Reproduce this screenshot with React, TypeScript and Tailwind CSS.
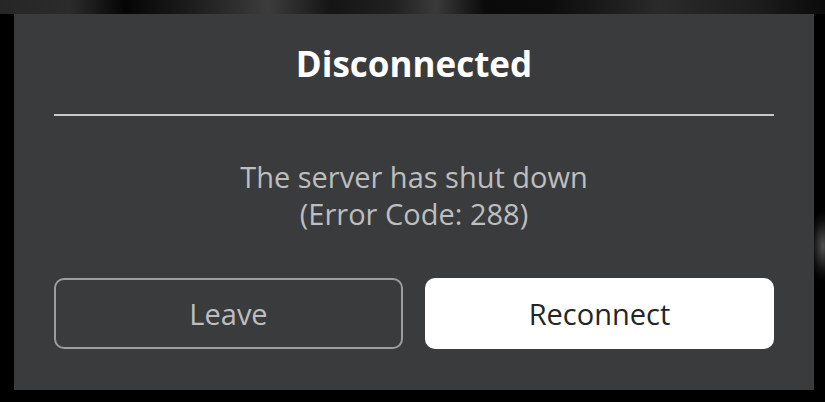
export default function App() {
  return (
    <div className="w-[825px] h-[402px] flex flex-col bg-black overflow-hidden font-['Open_Sans',sans-serif]">
      {/* blurred game view peeking above the dialog */}
      <div className="h-[14px] shrink-0 bg-[linear-gradient(90deg,#262626_0px,#2b2b2b_70px,#050505_125px,#1c1c1c_190px,#3c3c3c_268px,#151515_330px,#1f1f1f_390px,#3a3a3a_436px,#0a0a0a_485px,#0c0c0c_550px,#2a2a2a_660px,#1c1c1c_760px,#0a0a0a_825px)]" />
      <div className="flex flex-1">
        <div className="w-[14px] shrink-0 bg-black" />
        <div className="w-[800px] bg-[#393b3d] flex flex-col px-[40px] pt-[28px] pb-[41px]">
          <h1 className="text-center text-white font-bold text-[35px] leading-[44px]">Disconnected</h1>
          <div className="mt-[28px] h-[2px] bg-[#c8c8c8]" />
          <p className="mt-[42px] text-center text-[#bdbebe] text-[29px] leading-[37px]">
            The server has shut down
            <br />
            (Error Code: 288)
          </p>
          <div className="mt-[46px] grid grid-cols-2 gap-[22px]">
            <button className="h-[71px] rounded-[10px] border-2 border-[#9c9d9e] text-[#bdbebe] text-[29px] flex items-center justify-center">
              Leave
            </button>
            <button className="h-[71px] rounded-[10px] bg-white text-[#232527] text-[29px] flex items-center justify-center">
              Reconnect
            </button>
          </div>
        </div>
        <div className="w-[11px] shrink-0 bg-[radial-gradient(ellipse_14px_36px_at_9px_232px,#505050,#101010_70%,#000_100%)]" />
      </div>
      <div className="h-[12px] shrink-0 bg-black" />
    </div>
  );
}
